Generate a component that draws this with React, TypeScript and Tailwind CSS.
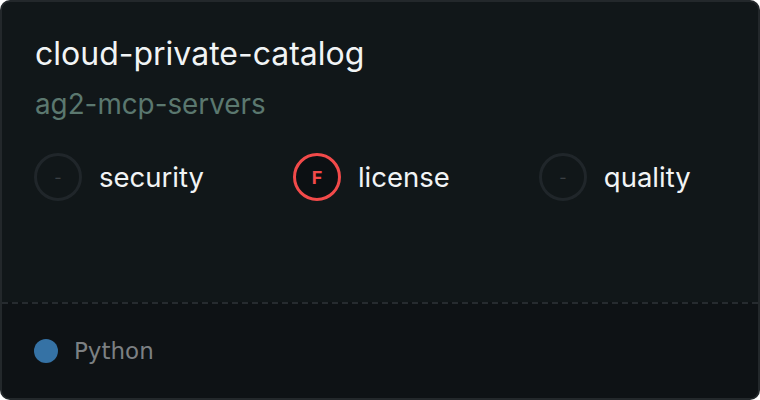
const scores = [
  { label: "security", grade: "-", fail: false },
  { label: "license", grade: "F", fail: true },
  { label: "quality", grade: "-", fail: false },
];

export default function App() {
  return (
    <div className="w-[760px] h-[400px] bg-white">
      <div className="w-full h-full rounded-[10px] border-2 border-[#23282b] bg-[#111719] overflow-hidden flex flex-col font-['Inter',sans-serif]">
        <div className="flex-1 px-[33px] pt-[32px]">
          <h1 className="text-[32px] leading-[40px] text-[#f1f4f5] font-normal">cloud-private-catalog</h1>
          <p className="mt-[12px] text-[27.8px] leading-[36px] text-[#5b786f]">ag2-mcp-servers</p>
          <div className="mt-[31px] -ml-[1px] flex items-center gap-[89px]">
            {scores.map((s) => (
              <div key={s.label} className="flex items-center gap-[17px]">
                <div
                  className={
                    s.fail
                      ? "w-[48px] h-[48px] rounded-full border-[3px] border-[#f24a4a] flex items-center justify-center text-[18px] font-bold text-[#f24a4a] bg-[#0c1013]"
                      : "w-[48px] h-[48px] rounded-full border-[3px] border-[#20262a] flex items-center justify-center text-[16px] text-[#3b4044]"
                  }
                >
                  {s.grade}
                </div>
                <span className="text-[27.5px] leading-[36px] text-[#f1f4f5]">{s.label}</span>
              </div>
            ))}
          </div>
        </div>
        <div className="h-[96px] border-t-2 border-dashed border-[#262b2f] bg-[#0e1215] flex items-center px-[32px] gap-[16px]">
          <span className="w-[24px] h-[24px] rounded-full bg-[#3572a5]"></span>
          <span className="text-[23px] text-[#7c8083] font-['DejaVu_Sans',sans-serif]">Python</span>
        </div>
      </div>
    </div>
  );
}
